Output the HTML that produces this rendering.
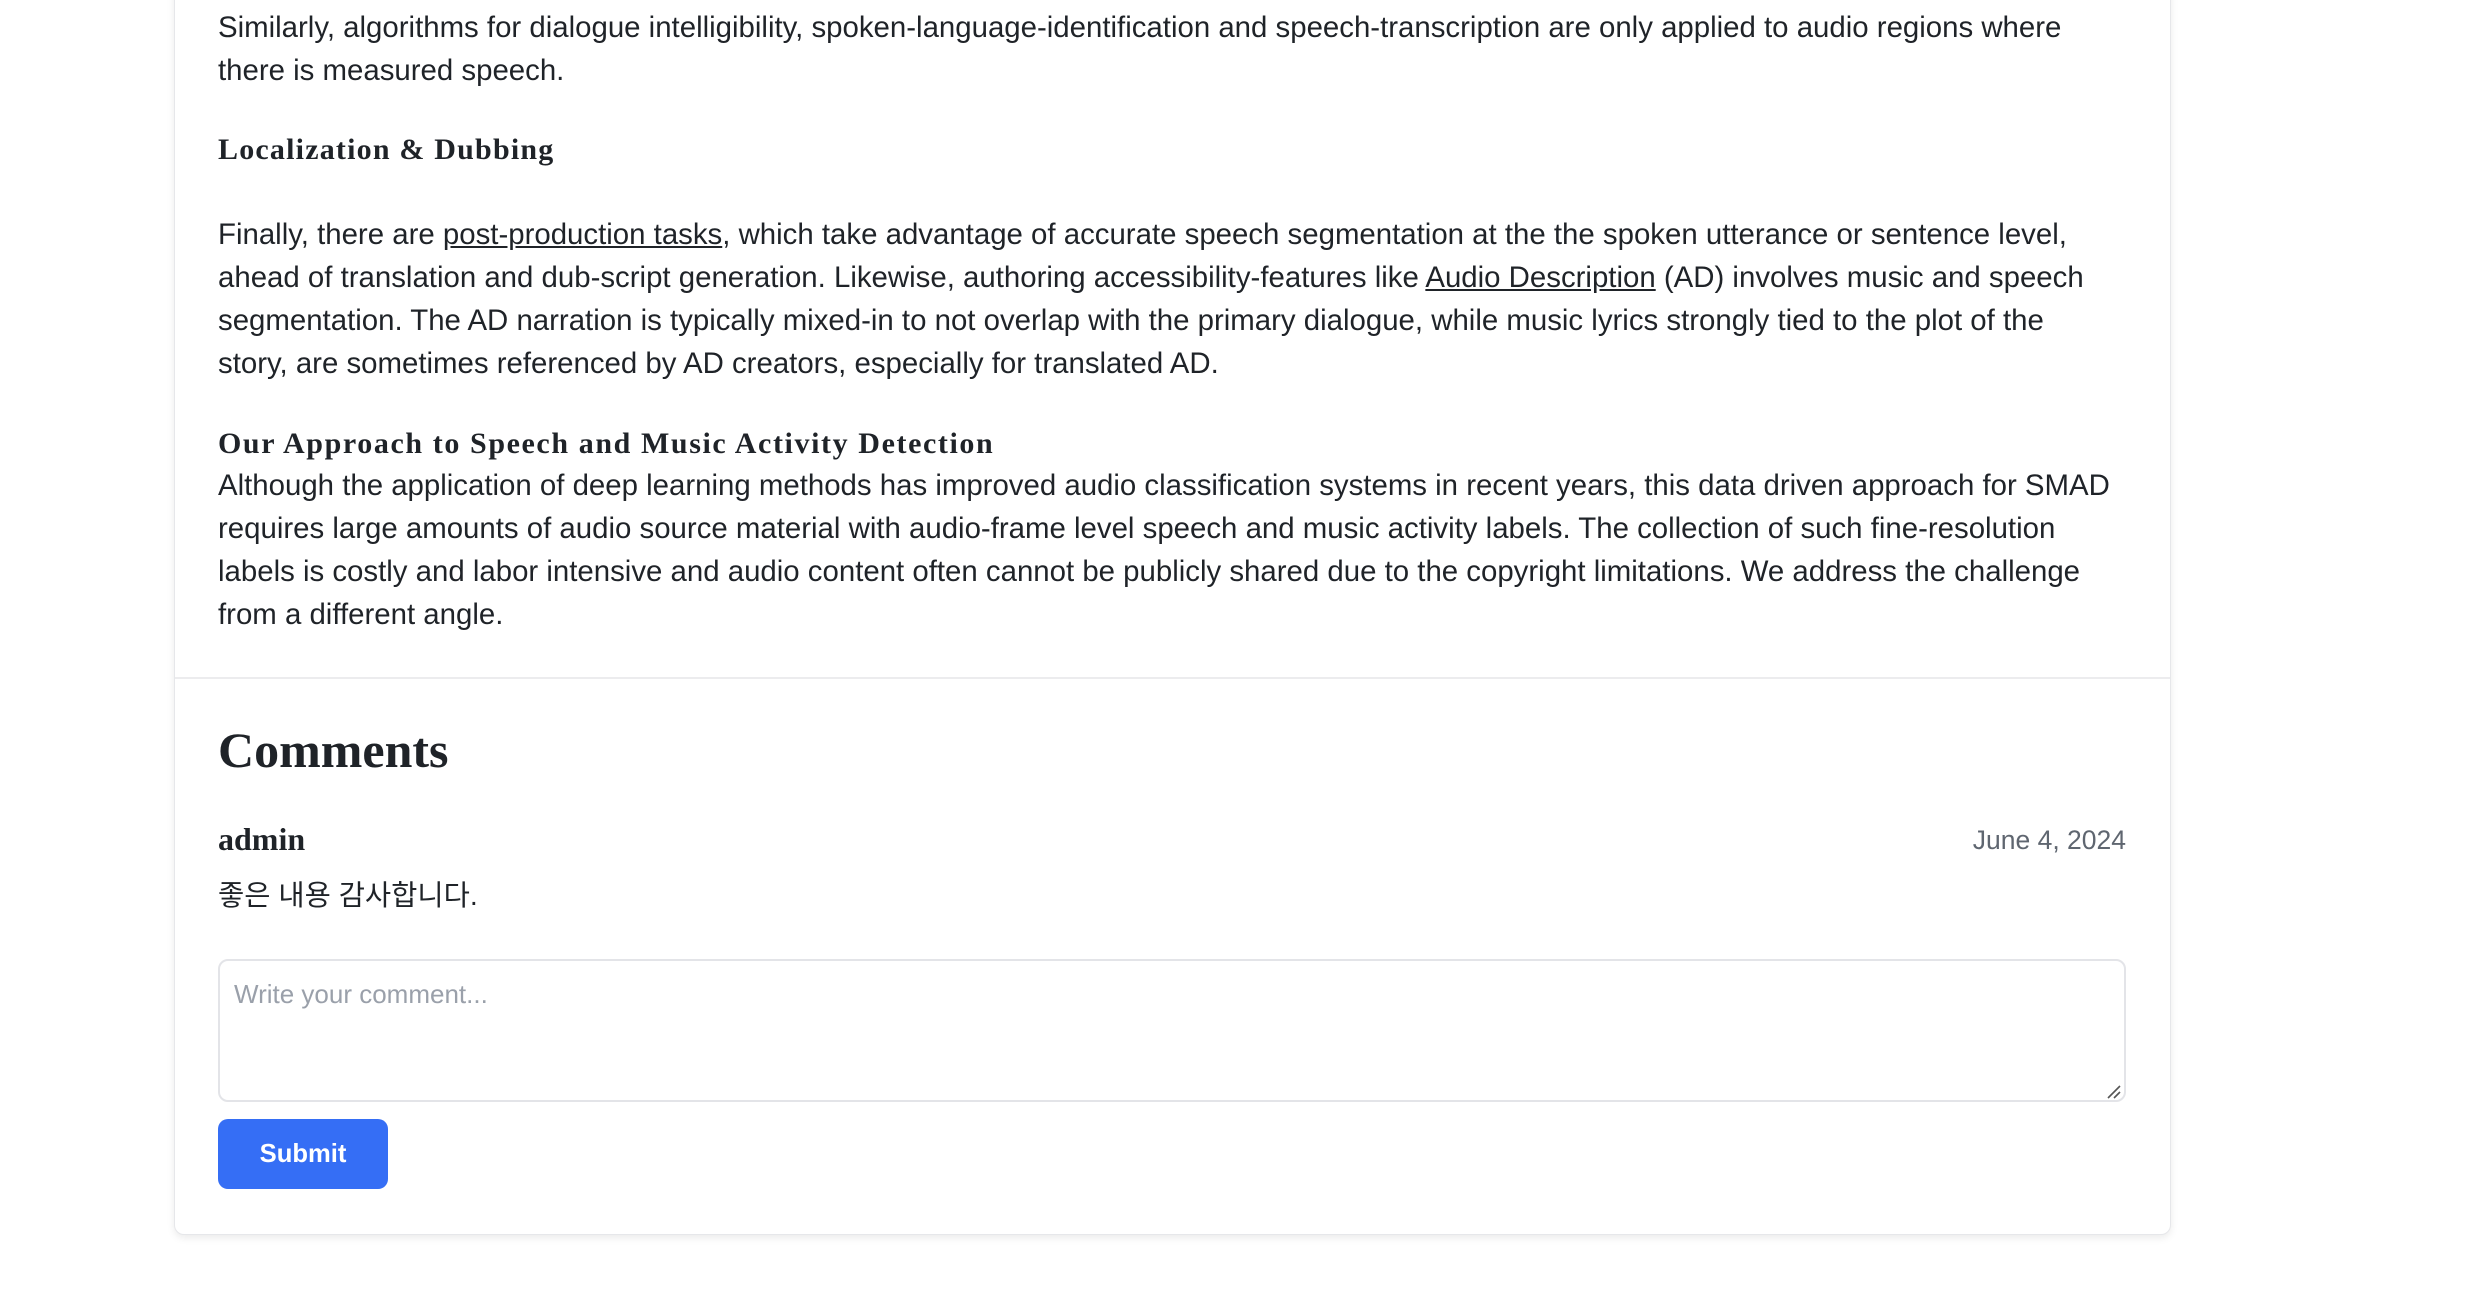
<!DOCTYPE html>
<html><head><meta charset="utf-8"><style>
html,body{margin:0;padding:0;background:#fff;width:2484px;height:1292px;overflow:hidden}
body{font-family:"Liberation Sans","Noto Sans CJK KR",sans-serif;color:#1f2328}
.card{position:absolute;left:174px;top:-20px;width:1995px;height:1253px;border:1px solid #e6e7ea;border-radius:10px;box-shadow:0 3px 8px rgba(0,0,0,0.08);background:#fff}
.sep{position:absolute;left:175px;width:1995px;top:677px;height:2px;background:#ececee}
.l{position:absolute;left:218px;font-size:29.4px;line-height:43px;white-space:nowrap}
.h{position:absolute;left:218px;font-family:"Liberation Serif","Noto Serif CJK SC",serif;font-weight:bold;font-size:30px;line-height:40px;white-space:nowrap;color:#1f2328}
a{color:#1f2328;text-decoration:underline}
.ta{position:absolute;left:218px;top:959px;width:1908px;height:143px;border:2px solid #e3e4e8;border-radius:10px;box-sizing:border-box}
.btn{position:absolute;left:218px;top:1119px;width:170px;height:70px;background:#356ef5;border-radius:10px;color:#fff;font-weight:bold;font-size:25.6px;line-height:70px;text-align:center}
</style></head><body>
<div class="card"></div>
<div class="sep"></div>
<div class="l" style="top:6px">Similarly, algorithms for dialogue intelligibility, spoken-language-identification and speech-transcription are only applied to audio regions where</div>
<div class="l" style="top:49px">there is measured speech.</div>
<div class="h" style="top:130px;letter-spacing:1.2px">Localization &amp; Dubbing</div>
<div class="l" style="top:213px">Finally, there are <a>post-production tasks</a>, which take advantage of accurate speech segmentation at the the spoken utterance or sentence level,</div>
<div class="l" style="top:256px">ahead of translation and dub-script generation. Likewise, authoring accessibility-features like <a>Audio Description</a> (AD) involves music and speech</div>
<div class="l" style="top:299px">segmentation. The AD narration is typically mixed-in to not overlap with the primary dialogue, while music lyrics strongly tied to the plot of the</div>
<div class="l" style="top:342px">story, are sometimes referenced by AD creators, especially for translated AD.</div>
<div class="h" style="top:424px;letter-spacing:1.6px">Our Approach to Speech and Music Activity Detection</div>
<div class="l" style="top:464px">Although the application of deep learning methods has improved audio classification systems in recent years, this data driven approach for SMAD</div>
<div class="l" style="top:507px">requires large amounts of audio source material with audio-frame level speech and music activity labels. The collection of such fine-resolution</div>
<div class="l" style="top:550px">labels is costly and labor intensive and audio content often cannot be publicly shared due to the copyright limitations. We address the challenge</div>
<div class="l" style="top:593px">from a different angle.</div>
<div class="h" style="top:722px;font-size:50px;line-height:56px">Comments</div>
<div class="h" style="top:819px;font-size:32px">admin</div>
<div class="l" style="top:819px;left:auto;right:358px;font-size:26.5px;color:#5f6670">June 4, 2024</div>
<div class="l" style="top:875px;font-size:28.5px">좋은 내용 감사합니다.</div>
<div class="ta"></div>
<div class="l" style="top:973px;left:234px;font-size:26px;color:#9aa0aa">Write your comment...</div>
<svg style="position:absolute;left:2106px;top:1084px" width="16" height="16"><path d="M2 14L14 2M8 14L14 8" stroke="#555" stroke-width="1.6"/></svg>
<div class="btn">Submit</div>
</body></html>
